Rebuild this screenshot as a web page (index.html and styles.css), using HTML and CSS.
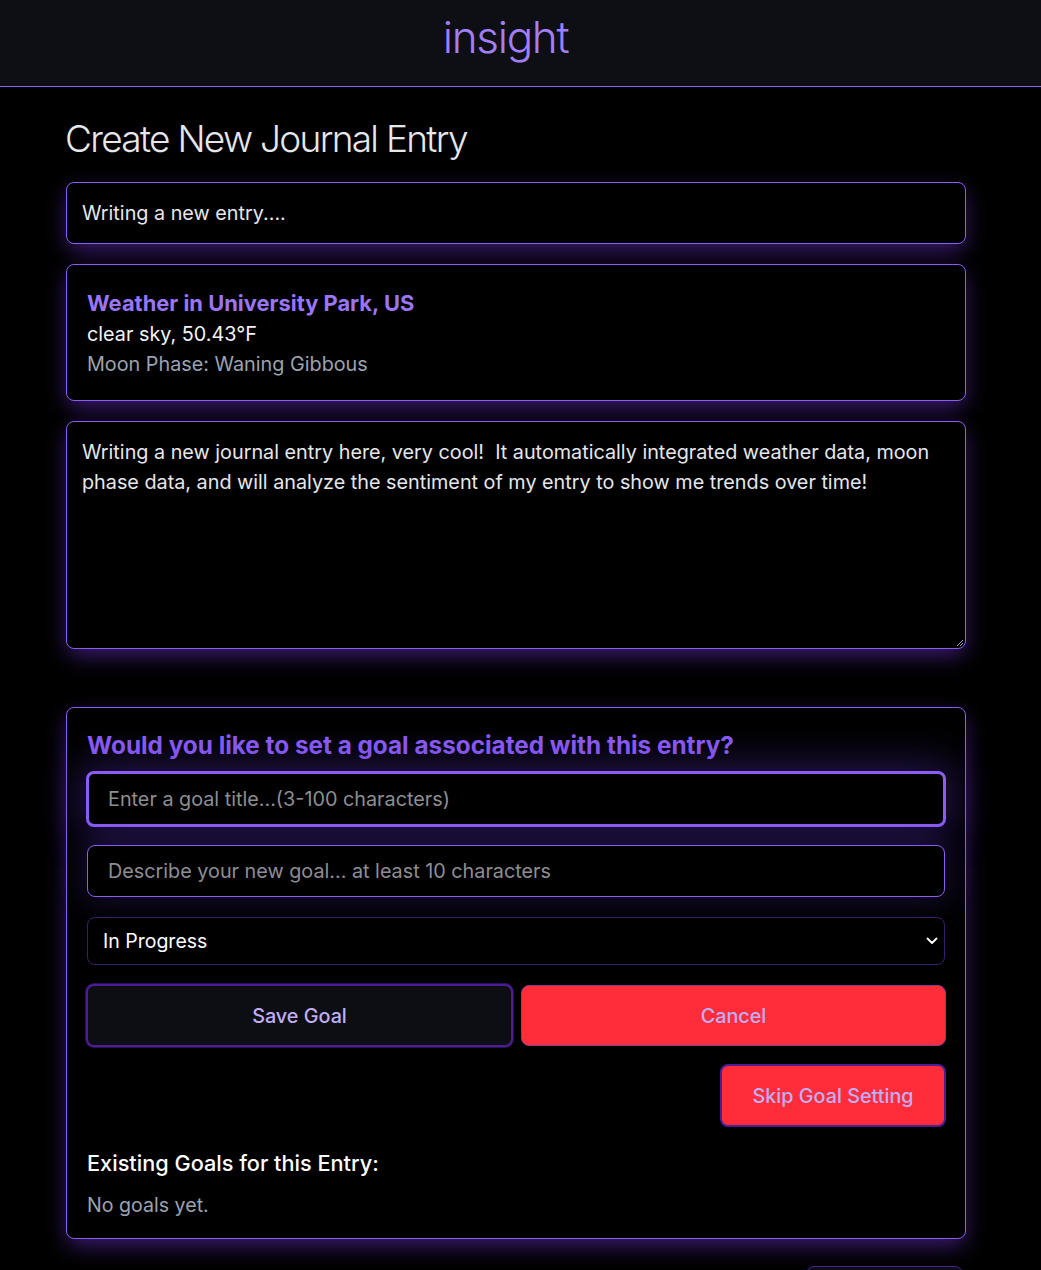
FILE: index.html
```html
<!DOCTYPE html>
<html lang="en">
<head>
<meta charset="utf-8">
<title>insight</title>
<link rel="stylesheet" href="styles.css">
</head>
<body>
<header class="topbar">
  <div class="brand">insight</div>
</header>
<main class="page">
  <h1 class="page-title">Create New Journal Entry</h1>
  <div class="field entry-title">Writing a new entry....</div>
  <section class="card weather">
    <div class="weather-title">Weather in University Park, US</div>
    <div class="weather-desc">clear sky, 50.43°F</div>
    <div class="weather-moon">Moon Phase: Waning Gibbous</div>
  </section>
  <div class="field entry-body">
    <p>Writing a new journal entry here, very cool!&nbsp; It automatically integrated weather data, moon phase data, and will analyze the sentiment of my entry to show me trends over time!</p>
    <svg class="resize" width="10" height="10" viewBox="0 0 10 10"><path d="M9 3 L3 9 M9 6 L6 9" stroke="#9ca3af" stroke-width="1"/></svg>
  </div>
  <section class="card goal">
    <h2 class="goal-heading">Would you like to set a goal associated with this entry?</h2>
    <div class="goal-input focused">Enter a goal title...(3-100 characters)</div>
    <div class="goal-input desc">Describe your new goal... at least 10 characters</div>
    <div class="goal-select">
      <span>In Progress</span>
      <svg width="12" height="8" viewBox="0 0 12 8"><path d="M1.5 1.5 L6 6 L10.5 1.5" fill="none" stroke="#fff" stroke-width="1.8" stroke-linecap="round" stroke-linejoin="round"/></svg>
    </div>
    <div class="btn-row">
      <button class="btn btn-save">Save Goal</button>
      <button class="btn btn-cancel">Cancel</button>
    </div>
    <div class="skip-row">
      <button class="btn btn-skip">Skip Goal Setting</button>
    </div>
    <h3 class="existing-title">Existing Goals for this Entry:</h3>
    <p class="existing-empty">No goals yet.</p>
  </section>
  <div class="footer-row">
    <button class="btn btn-submit">Save Entry</button>
  </div>
</main>
</body>
</html>
```
FILE: styles.css
```css
* { box-sizing: border-box; }
html, body { margin: 0; padding: 0; }
body {
  background: #000;
  color: #e5e7eb;
  font-family: Inter, "Noto Sans", "Liberation Sans", sans-serif;
  overflow: hidden;
}
.topbar {
  height: 87px;
  background: #0e0f14;
  border-bottom: 1px solid #8b5cf6;
  display: flex;
  justify-content: center;
  padding-right: 30px;
}
.brand {
  font-size: 44px;
  font-weight: 300;
  color: #a27ff8;
  line-height: 1;
  padding-top: 15px;
  letter-spacing: -1.3px;
}
.page {
  width: 900px;
  margin: 0 0 0 66px;
  display: flex;
  flex-direction: column;
}
.page-title {
  margin: 30px 0 0 -1px;
  font-size: 37px;
  font-weight: 300;
  color: #e5e7eb;
  letter-spacing: -1.7px;
  line-height: 44px;
}
.field, .card {
  border: 1px solid #8b5cf6;
  border-radius: 8px;
  background: #000;
  box-shadow: 0 8px 22px -2px rgba(124, 58, 237, 0.5);
}
.entry-title {
  margin-top: 21px;
  height: 62px;
  padding: 0 15px;
  display: flex;
  align-items: center;
  font-size: 19.8px;
}
.weather {
  margin-top: 20px;
  height: 137px;
  padding: 22px 20px;
  font-size: 19.8px;
  line-height: 30px;
}
.weather-title {
  font-size: 21.9px;
  font-weight: 700;
  color: #9a75f7;
  line-height: 32px;
}
.weather-desc { color: #f3f4f6; }
.weather-moon { color: #9ca3af; }
.entry-body {
  margin-top: 20px;
  height: 228px;
  padding: 15px 15px;
  position: relative;
}
.entry-body p {
  margin: 0;
  font-size: 19.8px;
  line-height: 30px;
  color: #e5e7eb;
}
.resize {
  position: absolute;
  right: 1px;
  bottom: 1px;
}
.goal {
  margin-top: 58px;
  padding: 21px 20px 20px;
  display: flex;
  flex-direction: column;
}
.goal-heading {
  margin: 0;
  font-size: 24.3px;
  font-weight: 700;
  color: #8b5cf6;
  line-height: 32px;
}
.goal-input {
  border-radius: 8px;
  background: #000;
  display: flex;
  align-items: center;
  padding: 0 19px;
  font-size: 19.8px;
  color: #8e8e93;
}
.goal-input.focused {
  margin: 10px -1px 0 -1px;
  height: 56px;
  border: 3px solid #8b5cf6;
  box-shadow: 0 0 40px 8px rgba(88, 50, 190, 0.4);
}
.goal-input.desc {
  margin-top: 18px;
  height: 52px;
  border: 1px solid #8b5cf6;
  padding: 0 20px;
  box-shadow: 0 0 30px 4px rgba(88, 50, 190, 0.28);
}
.goal-select {
  margin-top: 20px;
  height: 48px;
  border: 1px solid #3b1d6e;
  border-radius: 8px;
  background: #000;
  display: flex;
  align-items: center;
  justify-content: space-between;
  padding: 0 6px 0 15px;
  font-size: 19.5px;
  color: #fff;
}
.btn {
  font-family: inherit;
  font-size: 19.8px;
  font-weight: 500;
  color: #c0aef7;
  border-radius: 8px;
  cursor: pointer;
}
.btn-row {
  margin: 19px -1px 0;
  display: flex;
  gap: 8px;
}
.btn-save {
  flex: 1;
  height: 63px;
  background: #0d0e13;
  border: 2px solid #4c1d95;
  box-shadow: 0 0 0 1px #2a1157;
}
.btn-cancel {
  flex: 1;
  height: 61px;
  margin-top: 1px;
  background: #ff2d3a;
  border: 1px solid #8b3b8a;
}
.skip-row {
  display: flex;
  justify-content: flex-end;
  margin: 17px -1px 0;
}
.btn-skip {
  width: 226px;
  height: 63px;
  background: #ff2d3a;
  border: 2px solid #4c1d95;
}
.existing-title {
  margin: 23px 0 0;
  font-size: 21.7px;
  font-weight: 500;
  color: #fff;
  line-height: 26px;
}
.existing-empty {
  margin: 16px 0 0;
  font-size: 19.6px;
  color: #9ca3af;
  line-height: 26px;
}
.footer-row {
  margin-top: 27px;
  display: flex;
  justify-content: flex-end;
  padding-right: 3px;
}
.btn-submit {
  width: 157px;
  height: 50px;
  background: #0d0e13;
  border: 1px solid #4c1d95;
}
```
